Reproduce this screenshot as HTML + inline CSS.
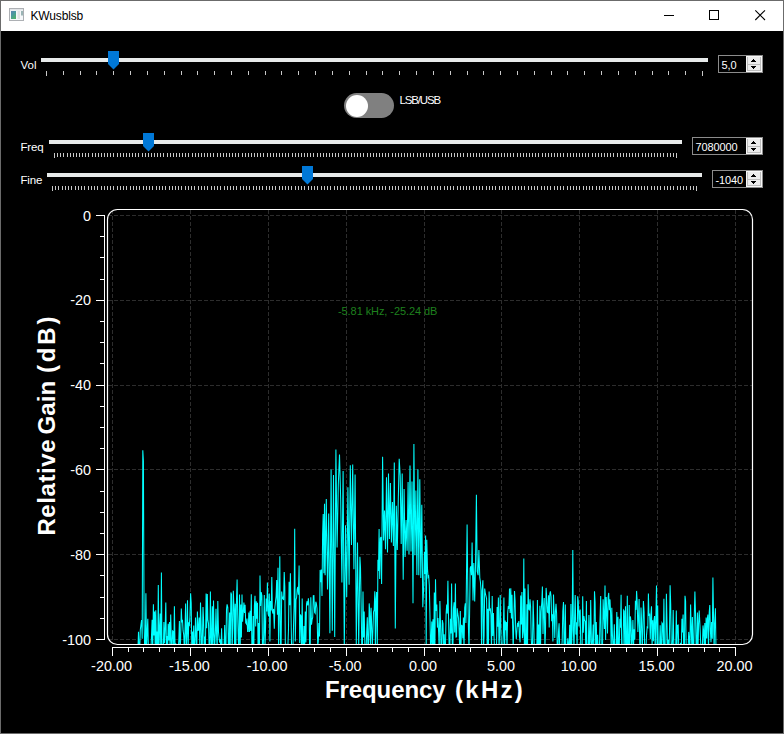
<!DOCTYPE html>
<html><head><meta charset="utf-8"><title>KWusblsb</title>
<style>
html,body{margin:0;padding:0;background:#000;}
body{width:784px;height:734px;position:relative;overflow:hidden;font-family:"Liberation Sans", sans-serif;color:#fff;}
#win{position:absolute;left:0;top:0;width:782px;height:732px;border:1px solid #6b6b6b;background:#000;}
#title{position:absolute;left:1px;top:1px;width:782px;height:30px;background:#fff;color:#000;font-size:12px;}
#title .t{position:absolute;left:29.5px;top:8px;line-height:14px;letter-spacing:-0.15px;}
#icon{position:absolute;left:8px;top:7px;width:15px;height:13px;}
.lbl{position:absolute;font-size:11.5px;line-height:13px;white-space:nowrap;}
.spin{position:absolute;height:16px;border:1px solid #8c8c8c;background:#000;font-size:11px;line-height:16px;}
.spin span{position:absolute;left:2.5px;top:0.5px;letter-spacing:-0.1px}
.spin .btn{position:absolute;right:0;top:0;display:block;}
#tog{position:absolute;left:344px;top:93px;width:50px;height:25px;border-radius:12.5px;background:#808080;}
#tog i{position:absolute;left:1.5px;top:1.5px;width:22px;height:22px;border-radius:11px;background:#fff;}
</style></head><body>
<div id="win"></div>
<div id="title">
<svg id="icon" viewBox="0 0 15 13"><defs><linearGradient id="ig" x1="0" y1="0" x2="0.6" y2="1"><stop offset="0" stop-color="#5d80b0"/><stop offset="0.45" stop-color="#4a98a0"/><stop offset="1" stop-color="#4fae6e"/></linearGradient></defs><rect x="0.5" y="0.5" width="14" height="12" fill="#f6f8fa" stroke="#adb0b4"/><rect x="1" y="1" width="13" height="1.500" fill="#e2e5e8"/><rect x="2" y="3" width="5" height="8" fill="url(#ig)"/><rect x="8.500" y="3" width="2.500" height="8" fill="#e1e2e3"/><rect x="12" y="3" width="2" height="4.500" fill="#8aa8a8" opacity="0.85"/></svg>
<span class="t">KWusblsb</span>
<svg style="position:absolute;right:0;top:0" width="140" height="30" viewBox="0 0 140 30" fill="none" stroke="#000" stroke-width="1"><path d="M21 14.5h10" shape-rendering="crispEdges"/><rect x="66.5" y="9.500" width="9" height="9" shape-rendering="crispEdges"/><path d="M112.300 9.300l9.700 9.700M122 9.300l-9.700 9.700" stroke-width="1.1"/></svg>
</div>
<svg width="784" height="200" viewBox="0 0 784 200" style="position:absolute;left:0;top:0" shape-rendering="crispEdges"><g fill="#e7eaea"><rect x="41" y="58" width="667" height="4"/><rect x="49" y="140" width="633" height="4"/><rect x="47" y="173" width="655" height="4"/></g><g fill="#c8c8c8"><rect x="46" y="71" width="1" height="5"/><rect x="63" y="71" width="1" height="4"/><rect x="80" y="71" width="1" height="4"/><rect x="96" y="71" width="1" height="4"/><rect x="113" y="71" width="1" height="4"/><rect x="130" y="71" width="1" height="4"/><rect x="147" y="71" width="1" height="4"/><rect x="164" y="71" width="1" height="4"/><rect x="181" y="71" width="1" height="4"/><rect x="197" y="71" width="1" height="4"/><rect x="214" y="71" width="1" height="4"/><rect x="231" y="71" width="1" height="4"/><rect x="248" y="71" width="1" height="4"/><rect x="265" y="71" width="1" height="4"/><rect x="281" y="71" width="1" height="4"/><rect x="298" y="71" width="1" height="4"/><rect x="315" y="71" width="1" height="4"/><rect x="332" y="71" width="1" height="4"/><rect x="349" y="71" width="1" height="4"/><rect x="366" y="71" width="1" height="4"/><rect x="382" y="71" width="1" height="4"/><rect x="399" y="71" width="1" height="4"/><rect x="416" y="71" width="1" height="4"/><rect x="433" y="71" width="1" height="4"/><rect x="450" y="71" width="1" height="4"/><rect x="467" y="71" width="1" height="4"/><rect x="483" y="71" width="1" height="4"/><rect x="500" y="71" width="1" height="4"/><rect x="517" y="71" width="1" height="4"/><rect x="534" y="71" width="1" height="4"/><rect x="551" y="71" width="1" height="4"/><rect x="567" y="71" width="1" height="4"/><rect x="584" y="71" width="1" height="4"/><rect x="601" y="71" width="1" height="4"/><rect x="618" y="71" width="1" height="4"/><rect x="635" y="71" width="1" height="4"/><rect x="652" y="71" width="1" height="4"/><rect x="668" y="71" width="1" height="4"/><rect x="685" y="71" width="1" height="4"/><rect x="702" y="71" width="1" height="5"/></g><g fill="#c8c8c8"><rect x="54" y="153" width="1" height="5"/><rect x="57" y="153" width="1" height="4"/><rect x="60" y="153" width="1" height="4"/><rect x="63" y="153" width="1" height="4"/><rect x="67" y="153" width="1" height="4"/><rect x="70" y="153" width="1" height="4"/><rect x="73" y="153" width="1" height="4"/><rect x="76" y="153" width="1" height="4"/><rect x="79" y="153" width="1" height="4"/><rect x="82" y="153" width="1" height="4"/><rect x="85" y="153" width="1" height="4"/><rect x="88" y="153" width="1" height="4"/><rect x="92" y="153" width="1" height="4"/><rect x="95" y="153" width="1" height="4"/><rect x="98" y="153" width="1" height="4"/><rect x="101" y="153" width="1" height="4"/><rect x="104" y="153" width="1" height="4"/><rect x="107" y="153" width="1" height="4"/><rect x="110" y="153" width="1" height="4"/><rect x="113" y="153" width="1" height="4"/><rect x="117" y="153" width="1" height="4"/><rect x="120" y="153" width="1" height="4"/><rect x="123" y="153" width="1" height="4"/><rect x="126" y="153" width="1" height="4"/><rect x="129" y="153" width="1" height="4"/><rect x="132" y="153" width="1" height="4"/><rect x="135" y="153" width="1" height="4"/><rect x="138" y="153" width="1" height="4"/><rect x="142" y="153" width="1" height="4"/><rect x="145" y="153" width="1" height="4"/><rect x="148" y="153" width="1" height="4"/><rect x="151" y="153" width="1" height="4"/><rect x="154" y="153" width="1" height="4"/><rect x="157" y="153" width="1" height="4"/><rect x="160" y="153" width="1" height="4"/><rect x="163" y="153" width="1" height="4"/><rect x="167" y="153" width="1" height="4"/><rect x="170" y="153" width="1" height="4"/><rect x="173" y="153" width="1" height="4"/><rect x="176" y="153" width="1" height="4"/><rect x="179" y="153" width="1" height="4"/><rect x="182" y="153" width="1" height="4"/><rect x="185" y="153" width="1" height="4"/><rect x="188" y="153" width="1" height="4"/><rect x="192" y="153" width="1" height="4"/><rect x="195" y="153" width="1" height="4"/><rect x="198" y="153" width="1" height="4"/><rect x="201" y="153" width="1" height="4"/><rect x="204" y="153" width="1" height="4"/><rect x="207" y="153" width="1" height="4"/><rect x="210" y="153" width="1" height="4"/><rect x="213" y="153" width="1" height="4"/><rect x="217" y="153" width="1" height="4"/><rect x="220" y="153" width="1" height="4"/><rect x="223" y="153" width="1" height="4"/><rect x="226" y="153" width="1" height="4"/><rect x="229" y="153" width="1" height="4"/><rect x="232" y="153" width="1" height="4"/><rect x="235" y="153" width="1" height="4"/><rect x="238" y="153" width="1" height="4"/><rect x="242" y="153" width="1" height="4"/><rect x="245" y="153" width="1" height="4"/><rect x="248" y="153" width="1" height="4"/><rect x="251" y="153" width="1" height="4"/><rect x="254" y="153" width="1" height="4"/><rect x="257" y="153" width="1" height="4"/><rect x="260" y="153" width="1" height="4"/><rect x="263" y="153" width="1" height="4"/><rect x="267" y="153" width="1" height="4"/><rect x="270" y="153" width="1" height="4"/><rect x="273" y="153" width="1" height="4"/><rect x="276" y="153" width="1" height="4"/><rect x="279" y="153" width="1" height="4"/><rect x="282" y="153" width="1" height="4"/><rect x="285" y="153" width="1" height="4"/><rect x="288" y="153" width="1" height="4"/><rect x="292" y="153" width="1" height="4"/><rect x="295" y="153" width="1" height="4"/><rect x="298" y="153" width="1" height="4"/><rect x="301" y="153" width="1" height="4"/><rect x="304" y="153" width="1" height="4"/><rect x="307" y="153" width="1" height="4"/><rect x="310" y="153" width="1" height="4"/><rect x="313" y="153" width="1" height="4"/><rect x="317" y="153" width="1" height="4"/><rect x="320" y="153" width="1" height="4"/><rect x="323" y="153" width="1" height="4"/><rect x="326" y="153" width="1" height="4"/><rect x="329" y="153" width="1" height="4"/><rect x="332" y="153" width="1" height="4"/><rect x="335" y="153" width="1" height="4"/><rect x="338" y="153" width="1" height="4"/><rect x="342" y="153" width="1" height="4"/><rect x="345" y="153" width="1" height="4"/><rect x="348" y="153" width="1" height="4"/><rect x="351" y="153" width="1" height="4"/><rect x="354" y="153" width="1" height="4"/><rect x="357" y="153" width="1" height="4"/><rect x="360" y="153" width="1" height="4"/><rect x="363" y="153" width="1" height="4"/><rect x="367" y="153" width="1" height="4"/><rect x="370" y="153" width="1" height="4"/><rect x="373" y="153" width="1" height="4"/><rect x="376" y="153" width="1" height="4"/><rect x="379" y="153" width="1" height="4"/><rect x="382" y="153" width="1" height="4"/><rect x="385" y="153" width="1" height="4"/><rect x="388" y="153" width="1" height="4"/><rect x="392" y="153" width="1" height="4"/><rect x="395" y="153" width="1" height="4"/><rect x="398" y="153" width="1" height="4"/><rect x="401" y="153" width="1" height="4"/><rect x="404" y="153" width="1" height="4"/><rect x="407" y="153" width="1" height="4"/><rect x="410" y="153" width="1" height="4"/><rect x="413" y="153" width="1" height="4"/><rect x="417" y="153" width="1" height="4"/><rect x="420" y="153" width="1" height="4"/><rect x="423" y="153" width="1" height="4"/><rect x="426" y="153" width="1" height="4"/><rect x="429" y="153" width="1" height="4"/><rect x="432" y="153" width="1" height="4"/><rect x="435" y="153" width="1" height="4"/><rect x="438" y="153" width="1" height="4"/><rect x="442" y="153" width="1" height="4"/><rect x="445" y="153" width="1" height="4"/><rect x="448" y="153" width="1" height="4"/><rect x="451" y="153" width="1" height="4"/><rect x="454" y="153" width="1" height="4"/><rect x="457" y="153" width="1" height="4"/><rect x="460" y="153" width="1" height="4"/><rect x="463" y="153" width="1" height="4"/><rect x="467" y="153" width="1" height="4"/><rect x="470" y="153" width="1" height="4"/><rect x="473" y="153" width="1" height="4"/><rect x="476" y="153" width="1" height="4"/><rect x="479" y="153" width="1" height="4"/><rect x="482" y="153" width="1" height="4"/><rect x="485" y="153" width="1" height="4"/><rect x="488" y="153" width="1" height="4"/><rect x="492" y="153" width="1" height="4"/><rect x="495" y="153" width="1" height="4"/><rect x="498" y="153" width="1" height="4"/><rect x="501" y="153" width="1" height="4"/><rect x="504" y="153" width="1" height="4"/><rect x="507" y="153" width="1" height="4"/><rect x="510" y="153" width="1" height="4"/><rect x="513" y="153" width="1" height="4"/><rect x="517" y="153" width="1" height="4"/><rect x="520" y="153" width="1" height="4"/><rect x="523" y="153" width="1" height="4"/><rect x="526" y="153" width="1" height="4"/><rect x="529" y="153" width="1" height="4"/><rect x="532" y="153" width="1" height="4"/><rect x="535" y="153" width="1" height="4"/><rect x="538" y="153" width="1" height="4"/><rect x="542" y="153" width="1" height="4"/><rect x="545" y="153" width="1" height="4"/><rect x="548" y="153" width="1" height="4"/><rect x="551" y="153" width="1" height="4"/><rect x="554" y="153" width="1" height="4"/><rect x="557" y="153" width="1" height="4"/><rect x="560" y="153" width="1" height="4"/><rect x="563" y="153" width="1" height="4"/><rect x="567" y="153" width="1" height="4"/><rect x="570" y="153" width="1" height="4"/><rect x="573" y="153" width="1" height="4"/><rect x="576" y="153" width="1" height="4"/><rect x="579" y="153" width="1" height="4"/><rect x="582" y="153" width="1" height="4"/><rect x="585" y="153" width="1" height="4"/><rect x="588" y="153" width="1" height="4"/><rect x="592" y="153" width="1" height="4"/><rect x="595" y="153" width="1" height="4"/><rect x="598" y="153" width="1" height="4"/><rect x="601" y="153" width="1" height="4"/><rect x="604" y="153" width="1" height="4"/><rect x="607" y="153" width="1" height="4"/><rect x="610" y="153" width="1" height="4"/><rect x="613" y="153" width="1" height="4"/><rect x="617" y="153" width="1" height="4"/><rect x="620" y="153" width="1" height="4"/><rect x="623" y="153" width="1" height="4"/><rect x="626" y="153" width="1" height="4"/><rect x="629" y="153" width="1" height="4"/><rect x="632" y="153" width="1" height="4"/><rect x="635" y="153" width="1" height="4"/><rect x="638" y="153" width="1" height="4"/><rect x="642" y="153" width="1" height="4"/><rect x="645" y="153" width="1" height="4"/><rect x="648" y="153" width="1" height="4"/><rect x="651" y="153" width="1" height="4"/><rect x="654" y="153" width="1" height="4"/><rect x="657" y="153" width="1" height="4"/><rect x="660" y="153" width="1" height="4"/><rect x="663" y="153" width="1" height="4"/><rect x="667" y="153" width="1" height="4"/><rect x="670" y="153" width="1" height="4"/><rect x="673" y="153" width="1" height="4"/><rect x="676" y="153" width="1" height="5"/></g><g fill="#c8c8c8"><rect x="52" y="186" width="1" height="5"/><rect x="55" y="186" width="1" height="4"/><rect x="58" y="186" width="1" height="4"/><rect x="62" y="186" width="1" height="4"/><rect x="65" y="186" width="1" height="4"/><rect x="68" y="186" width="1" height="4"/><rect x="71" y="186" width="1" height="4"/><rect x="75" y="186" width="1" height="4"/><rect x="78" y="186" width="1" height="4"/><rect x="81" y="186" width="1" height="4"/><rect x="84" y="186" width="1" height="4"/><rect x="88" y="186" width="1" height="4"/><rect x="91" y="186" width="1" height="4"/><rect x="94" y="186" width="1" height="4"/><rect x="97" y="186" width="1" height="4"/><rect x="101" y="186" width="1" height="4"/><rect x="104" y="186" width="1" height="4"/><rect x="107" y="186" width="1" height="4"/><rect x="110" y="186" width="1" height="4"/><rect x="113" y="186" width="1" height="4"/><rect x="117" y="186" width="1" height="4"/><rect x="120" y="186" width="1" height="4"/><rect x="123" y="186" width="1" height="4"/><rect x="126" y="186" width="1" height="4"/><rect x="130" y="186" width="1" height="4"/><rect x="133" y="186" width="1" height="4"/><rect x="136" y="186" width="1" height="4"/><rect x="139" y="186" width="1" height="4"/><rect x="143" y="186" width="1" height="4"/><rect x="146" y="186" width="1" height="4"/><rect x="149" y="186" width="1" height="4"/><rect x="152" y="186" width="1" height="4"/><rect x="156" y="186" width="1" height="4"/><rect x="159" y="186" width="1" height="4"/><rect x="162" y="186" width="1" height="4"/><rect x="165" y="186" width="1" height="4"/><rect x="169" y="186" width="1" height="4"/><rect x="172" y="186" width="1" height="4"/><rect x="175" y="186" width="1" height="4"/><rect x="178" y="186" width="1" height="4"/><rect x="181" y="186" width="1" height="4"/><rect x="185" y="186" width="1" height="4"/><rect x="188" y="186" width="1" height="4"/><rect x="191" y="186" width="1" height="4"/><rect x="194" y="186" width="1" height="4"/><rect x="198" y="186" width="1" height="4"/><rect x="201" y="186" width="1" height="4"/><rect x="204" y="186" width="1" height="4"/><rect x="207" y="186" width="1" height="4"/><rect x="211" y="186" width="1" height="4"/><rect x="214" y="186" width="1" height="4"/><rect x="217" y="186" width="1" height="4"/><rect x="220" y="186" width="1" height="4"/><rect x="224" y="186" width="1" height="4"/><rect x="227" y="186" width="1" height="4"/><rect x="230" y="186" width="1" height="4"/><rect x="233" y="186" width="1" height="4"/><rect x="236" y="186" width="1" height="4"/><rect x="240" y="186" width="1" height="4"/><rect x="243" y="186" width="1" height="4"/><rect x="246" y="186" width="1" height="4"/><rect x="249" y="186" width="1" height="4"/><rect x="253" y="186" width="1" height="4"/><rect x="256" y="186" width="1" height="4"/><rect x="259" y="186" width="1" height="4"/><rect x="262" y="186" width="1" height="4"/><rect x="266" y="186" width="1" height="4"/><rect x="269" y="186" width="1" height="4"/><rect x="272" y="186" width="1" height="4"/><rect x="275" y="186" width="1" height="4"/><rect x="279" y="186" width="1" height="4"/><rect x="282" y="186" width="1" height="4"/><rect x="285" y="186" width="1" height="4"/><rect x="288" y="186" width="1" height="4"/><rect x="291" y="186" width="1" height="4"/><rect x="295" y="186" width="1" height="4"/><rect x="298" y="186" width="1" height="4"/><rect x="301" y="186" width="1" height="4"/><rect x="304" y="186" width="1" height="4"/><rect x="308" y="186" width="1" height="4"/><rect x="311" y="186" width="1" height="4"/><rect x="314" y="186" width="1" height="4"/><rect x="317" y="186" width="1" height="4"/><rect x="321" y="186" width="1" height="4"/><rect x="324" y="186" width="1" height="4"/><rect x="327" y="186" width="1" height="4"/><rect x="330" y="186" width="1" height="4"/><rect x="334" y="186" width="1" height="4"/><rect x="337" y="186" width="1" height="4"/><rect x="340" y="186" width="1" height="4"/><rect x="343" y="186" width="1" height="4"/><rect x="346" y="186" width="1" height="4"/><rect x="350" y="186" width="1" height="4"/><rect x="353" y="186" width="1" height="4"/><rect x="356" y="186" width="1" height="4"/><rect x="359" y="186" width="1" height="4"/><rect x="363" y="186" width="1" height="4"/><rect x="366" y="186" width="1" height="4"/><rect x="369" y="186" width="1" height="4"/><rect x="372" y="186" width="1" height="4"/><rect x="376" y="186" width="1" height="4"/><rect x="379" y="186" width="1" height="4"/><rect x="382" y="186" width="1" height="4"/><rect x="385" y="186" width="1" height="4"/><rect x="389" y="186" width="1" height="4"/><rect x="392" y="186" width="1" height="4"/><rect x="395" y="186" width="1" height="4"/><rect x="398" y="186" width="1" height="4"/><rect x="402" y="186" width="1" height="4"/><rect x="405" y="186" width="1" height="4"/><rect x="408" y="186" width="1" height="4"/><rect x="411" y="186" width="1" height="4"/><rect x="414" y="186" width="1" height="4"/><rect x="418" y="186" width="1" height="4"/><rect x="421" y="186" width="1" height="4"/><rect x="424" y="186" width="1" height="4"/><rect x="427" y="186" width="1" height="4"/><rect x="431" y="186" width="1" height="4"/><rect x="434" y="186" width="1" height="4"/><rect x="437" y="186" width="1" height="4"/><rect x="440" y="186" width="1" height="4"/><rect x="444" y="186" width="1" height="4"/><rect x="447" y="186" width="1" height="4"/><rect x="450" y="186" width="1" height="4"/><rect x="453" y="186" width="1" height="4"/><rect x="457" y="186" width="1" height="4"/><rect x="460" y="186" width="1" height="4"/><rect x="463" y="186" width="1" height="4"/><rect x="466" y="186" width="1" height="4"/><rect x="469" y="186" width="1" height="4"/><rect x="473" y="186" width="1" height="4"/><rect x="476" y="186" width="1" height="4"/><rect x="479" y="186" width="1" height="4"/><rect x="482" y="186" width="1" height="4"/><rect x="486" y="186" width="1" height="4"/><rect x="489" y="186" width="1" height="4"/><rect x="492" y="186" width="1" height="4"/><rect x="495" y="186" width="1" height="4"/><rect x="499" y="186" width="1" height="4"/><rect x="502" y="186" width="1" height="4"/><rect x="505" y="186" width="1" height="4"/><rect x="508" y="186" width="1" height="4"/><rect x="512" y="186" width="1" height="4"/><rect x="515" y="186" width="1" height="4"/><rect x="518" y="186" width="1" height="4"/><rect x="521" y="186" width="1" height="4"/><rect x="524" y="186" width="1" height="4"/><rect x="528" y="186" width="1" height="4"/><rect x="531" y="186" width="1" height="4"/><rect x="534" y="186" width="1" height="4"/><rect x="537" y="186" width="1" height="4"/><rect x="541" y="186" width="1" height="4"/><rect x="544" y="186" width="1" height="4"/><rect x="547" y="186" width="1" height="4"/><rect x="550" y="186" width="1" height="4"/><rect x="554" y="186" width="1" height="4"/><rect x="557" y="186" width="1" height="4"/><rect x="560" y="186" width="1" height="4"/><rect x="563" y="186" width="1" height="4"/><rect x="567" y="186" width="1" height="4"/><rect x="570" y="186" width="1" height="4"/><rect x="573" y="186" width="1" height="4"/><rect x="576" y="186" width="1" height="4"/><rect x="579" y="186" width="1" height="4"/><rect x="583" y="186" width="1" height="4"/><rect x="586" y="186" width="1" height="4"/><rect x="589" y="186" width="1" height="4"/><rect x="592" y="186" width="1" height="4"/><rect x="596" y="186" width="1" height="4"/><rect x="599" y="186" width="1" height="4"/><rect x="602" y="186" width="1" height="4"/><rect x="605" y="186" width="1" height="4"/><rect x="609" y="186" width="1" height="4"/><rect x="612" y="186" width="1" height="4"/><rect x="615" y="186" width="1" height="4"/><rect x="618" y="186" width="1" height="4"/><rect x="622" y="186" width="1" height="4"/><rect x="625" y="186" width="1" height="4"/><rect x="628" y="186" width="1" height="4"/><rect x="631" y="186" width="1" height="4"/><rect x="635" y="186" width="1" height="4"/><rect x="638" y="186" width="1" height="4"/><rect x="641" y="186" width="1" height="4"/><rect x="644" y="186" width="1" height="4"/><rect x="647" y="186" width="1" height="4"/><rect x="651" y="186" width="1" height="4"/><rect x="654" y="186" width="1" height="4"/><rect x="657" y="186" width="1" height="4"/><rect x="660" y="186" width="1" height="4"/><rect x="664" y="186" width="1" height="4"/><rect x="667" y="186" width="1" height="4"/><rect x="670" y="186" width="1" height="4"/><rect x="673" y="186" width="1" height="4"/><rect x="677" y="186" width="1" height="4"/><rect x="680" y="186" width="1" height="4"/><rect x="683" y="186" width="1" height="4"/><rect x="686" y="186" width="1" height="4"/><rect x="690" y="186" width="1" height="4"/><rect x="693" y="186" width="1" height="4"/><rect x="696" y="186" width="1" height="5"/></g><path shape-rendering="geometricPrecision" d="M108 51h11v13l-5.5 5.5l-5.5 -5.5z" fill="#0078d7"/><path shape-rendering="geometricPrecision" d="M143 133h11v13l-5.5 5.5l-5.5 -5.5z" fill="#0078d7"/><path shape-rendering="geometricPrecision" d="M302 166h11v13l-5.5 5.5l-5.5 -5.5z" fill="#0078d7"/></svg>
<div class="lbl" style="left:20.5px;top:58.5px">Vol</div>
<div class="lbl" style="left:20.5px;top:141px;letter-spacing:-0.2px">Freq</div>
<div class="lbl" style="left:20.5px;top:174px;letter-spacing:-0.2px">Fine</div>
<div id="tog"><i></i></div>
<div class="lbl" style="left:399.5px;top:94px;letter-spacing:-1.15px">LSB/USB</div>
<div class="spin" style="left:718px;top:55px;width:43px"><span>5,0</span><svg class="btn" width="16" height="16" viewBox="0 0 16 16" shape-rendering="crispEdges"><rect width="16" height="16" fill="#f7f7f7"/><rect x="1" y="1" width="14" height="14" fill="#ececec"/><g fill="#bdbdbd"><rect x="1" y="1" width="1" height="14"/><rect x="14" y="1" width="1" height="14"/><rect x="1" y="8" width="14" height="1"/><rect x="1" y="14" width="14" height="1"/></g><g fill="#000"><rect x="7" y="3" width="1" height="1"/><rect x="6" y="4" width="3" height="1"/><rect x="5" y="5" width="5" height="1"/><rect x="5" y="10" width="5" height="1"/><rect x="6" y="11" width="3" height="1"/><rect x="7" y="12" width="1" height="1"/></g></svg></div>
<div class="spin" style="left:692px;top:137px;width:69px"><span>7080000</span><svg class="btn" width="16" height="16" viewBox="0 0 16 16" shape-rendering="crispEdges"><rect width="16" height="16" fill="#f7f7f7"/><rect x="1" y="1" width="14" height="14" fill="#ececec"/><g fill="#bdbdbd"><rect x="1" y="1" width="1" height="14"/><rect x="14" y="1" width="1" height="14"/><rect x="1" y="8" width="14" height="1"/><rect x="1" y="14" width="14" height="1"/></g><g fill="#000"><rect x="7" y="3" width="1" height="1"/><rect x="6" y="4" width="3" height="1"/><rect x="5" y="5" width="5" height="1"/><rect x="5" y="10" width="5" height="1"/><rect x="6" y="11" width="3" height="1"/><rect x="7" y="12" width="1" height="1"/></g></svg></div>
<div class="spin" style="left:712px;top:170px;width:49px"><span>-1040</span><svg class="btn" width="16" height="16" viewBox="0 0 16 16" shape-rendering="crispEdges"><rect width="16" height="16" fill="#f7f7f7"/><rect x="1" y="1" width="14" height="14" fill="#ececec"/><g fill="#bdbdbd"><rect x="1" y="1" width="1" height="14"/><rect x="14" y="1" width="1" height="14"/><rect x="1" y="8" width="14" height="1"/><rect x="1" y="14" width="14" height="1"/></g><g fill="#000"><rect x="7" y="3" width="1" height="1"/><rect x="6" y="4" width="3" height="1"/><rect x="5" y="5" width="5" height="1"/><rect x="5" y="10" width="5" height="1"/><rect x="6" y="11" width="3" height="1"/><rect x="7" y="12" width="1" height="1"/></g></svg></div>
<svg width="784" height="734" viewBox="0 0 784 734" style="position:absolute;left:0;top:0" font-family='"Liberation Sans", sans-serif'><defs><clipPath id="pc"><rect x="108" y="210" width="644" height="434" rx="9"/></clipPath></defs><g stroke="#2d2d2d" stroke-width="1" stroke-dasharray="4 2" fill="none" clip-path="url(#pc)"><path d="M108 215.5H752"/><path d="M108 300.5H752"/><path d="M108 385.5H752"/><path d="M108 469.5H752"/><path d="M108 554.5H752"/><path d="M108 639.5H752"/><path d="M112.5 210V644"/><path d="M190.5 210V644"/><path d="M268.5 210V644"/><path d="M346.5 210V644"/><path d="M424.5 210V644"/><path d="M501.5 210V644"/><path d="M579.5 210V644"/><path d="M657.5 210V644"/><path d="M735.5 210V644"/></g><path d="M136.0 648.4L136.6 650.0L137.2 647.9L137.9 650.0L138.5 631.8L139.1 650.0L139.7 650.0L140.3 629.8L141.0 624.3L141.6 620.1L142.2 638.7L142.8 450.3L143.4 460.9L144.1 623.5L144.7 650.0L145.3 650.0L145.9 593.2L146.5 650.0L147.2 631.7L147.8 618.7L148.4 650.0L149.0 650.0L149.6 650.0L150.3 650.0L150.9 650.0L151.5 636.1L152.1 619.7L152.7 650.0L153.4 604.3L154.0 635.5L154.6 611.5L155.2 650.0L155.8 610.3L156.5 650.0L157.1 631.6L157.7 650.0L158.3 584.9L158.9 650.0L159.6 628.6L160.2 613.5L160.8 650.0L161.4 572.4L162.0 650.0L162.7 650.0L163.3 650.0L163.9 621.9L164.5 643.2L165.1 629.7L165.8 602.4L166.4 647.2L167.0 635.9L167.6 650.0L168.2 623.7L168.9 640.6L169.5 621.9L170.1 650.0L170.7 614.5L171.3 639.2L172.0 650.0L172.6 630.9L173.2 631.5L173.8 649.7L174.4 606.2L175.1 650.0L175.7 643.4L176.3 646.6L176.9 650.0L177.5 650.0L178.2 650.0L178.8 640.5L179.4 621.1L180.0 650.0L180.6 640.9L181.3 608.5L181.9 622.3L182.5 619.8L183.1 630.7L183.7 634.6L184.4 650.0L185.0 630.9L185.6 603.4L186.2 650.0L186.8 634.7L187.5 600.2L188.1 650.0L188.7 622.3L189.3 626.1L189.9 617.2L190.6 593.3L191.2 603.1L191.8 650.0L192.4 631.5L193.0 650.0L193.7 625.5L194.3 650.0L194.9 650.0L195.5 617.5L196.1 633.6L196.8 650.0L197.4 611.4L198.0 630.9L198.6 629.4L199.2 617.5L199.9 650.0L200.5 602.5L201.1 624.3L201.7 650.0L202.3 644.2L203.0 606.9L203.6 620.4L204.2 650.0L204.8 636.4L205.4 650.0L206.1 593.4L206.7 628.3L207.3 594.1L207.9 620.2L208.5 623.4L209.2 650.0L209.8 650.0L210.4 591.6L211.0 637.9L211.6 650.0L212.3 606.2L212.9 650.0L213.5 600.5L214.1 633.9L214.7 647.3L215.4 631.9L216.0 608.7L216.6 635.4L217.2 650.0L217.8 600.9L218.5 632.1L219.1 637.8L219.7 642.7L220.3 639.2L220.9 650.0L221.6 628.3L222.2 650.0L222.8 650.0L223.4 650.0L224.0 650.0L224.7 624.9L225.3 646.5L225.9 650.0L226.5 609.5L227.1 604.4L227.8 607.5L228.4 650.0L229.0 646.2L229.6 612.4L230.2 650.0L230.9 592.4L231.5 594.5L232.1 650.0L232.7 628.1L233.3 590.8L234.0 608.0L234.6 650.0L235.2 603.8L235.8 650.0L236.4 603.7L237.1 579.5L237.7 615.0L238.3 639.0L238.9 650.0L239.5 594.6L240.2 650.0L240.8 604.5L241.4 637.4L242.0 594.5L242.6 621.8L243.3 612.0L243.9 602.6L244.5 612.9L245.1 604.7L245.7 622.8L246.4 623.9L247.0 618.5L247.6 631.4L248.2 631.4L248.8 612.4L249.5 632.0L250.1 610.7L250.7 630.9L251.3 594.2L251.9 650.0L252.6 650.0L253.2 615.9L253.8 650.0L254.4 605.7L255.0 595.7L255.7 626.5L256.3 601.3L256.9 618.8L257.5 602.7L258.1 650.0L258.8 622.9L259.4 650.0L260.0 575.4L260.6 605.9L261.2 592.2L261.9 595.8L262.5 650.0L263.1 650.0L263.7 634.1L264.3 595.0L265.0 650.0L265.6 625.0L266.2 598.4L266.8 611.4L267.4 582.4L268.1 613.6L268.7 616.3L269.3 593.6L269.9 641.6L270.5 600.9L271.2 610.5L271.8 577.1L272.4 611.7L273.0 613.6L273.6 608.9L274.3 628.7L274.9 607.3L275.5 601.5L276.1 596.1L276.7 580.1L277.4 614.8L278.0 567.8L278.6 650.0L279.2 612.7L279.8 556.3L280.5 644.6L281.1 646.2L281.7 591.5L282.3 598.5L282.9 597.6L283.6 600.1L284.2 572.1L284.8 586.4L285.4 650.0L286.0 643.8L286.7 650.0L287.3 647.7L287.9 646.7L288.5 629.3L289.1 581.8L289.8 605.3L290.4 573.3L291.0 611.9L291.6 650.0L292.2 645.6L292.9 650.0L293.5 627.3L294.1 605.1L294.7 528.8L295.3 641.5L296.0 599.6L296.6 597.7L297.2 589.0L297.8 587.0L298.4 594.7L299.1 565.5L299.7 643.0L300.3 614.4L300.9 615.9L301.5 650.0L302.2 598.4L302.8 650.0L303.4 650.0L304.0 626.1L304.6 650.0L305.3 611.6L305.9 642.6L306.5 604.1L307.1 601.2L307.7 605.4L308.4 598.4L309.0 605.8L309.6 647.0L310.2 650.0L310.8 597.2L311.5 624.6L312.1 619.7L312.7 617.5L313.3 595.8L313.9 595.7L314.6 612.4L315.2 613.3L315.8 601.7L316.4 603.5L317.0 608.5L317.7 645.5L318.3 641.7L318.9 623.0L319.5 636.4L320.1 569.9L320.8 582.3L321.4 569.5L322.0 596.1L322.6 534.6L323.2 513.9L323.9 573.2L324.5 503.8L325.1 575.3L326.3 499.1L327.5 589.6L328.7 513.5L329.9 633.3L331.1 469.4L332.3 630.8L333.5 475.1L334.7 637.0L335.9 449.5L337.1 547.5L338.3 484.8L339.5 454.6L340.7 499.6L341.9 582.5L343.1 471.0L344.3 650.0L345.5 525.2L346.7 597.0L347.9 487.2L349.1 584.8L350.3 465.2L351.5 545.1L352.7 464.6L353.9 569.2L355.1 474.4L356.3 644.2L357.5 542.4L358.7 647.1L359.9 556.7L360.5 567.2L361.1 602.6L361.8 650.0L362.4 650.0L363.0 591.5L363.6 637.6L364.2 611.5L364.9 644.9L365.5 647.7L366.1 650.0L366.7 631.6L367.3 617.3L368.0 650.0L368.6 641.9L369.2 603.4L369.8 612.6L370.4 645.0L371.1 607.8L371.7 626.4L372.3 647.3L372.9 631.1L373.5 612.0L374.2 609.7L374.8 591.2L375.4 649.4L376.0 599.1L376.6 592.1L377.3 650.0L377.9 559.7L378.5 571.0L379.1 529.1L379.7 579.1L380.4 538.2L381.0 536.9L381.6 584.1L382.6 456.7L383.6 540.4L384.5 510.6L385.5 549.3L386.5 477.2L387.5 552.5L388.5 473.6L389.4 538.9L390.4 483.1L391.4 542.4L392.4 501.9L393.4 546.1L394.3 462.6L395.3 628.5L396.3 505.7L397.3 549.9L398.3 499.3L399.2 458.8L400.2 475.8L401.2 544.0L402.2 473.6L403.2 579.7L404.1 489.1L405.1 557.0L406.1 519.9L407.1 550.7L408.1 481.9L409.0 554.2L410.0 465.6L411.0 551.6L412.0 481.4L413.0 603.2L413.9 444.0L414.9 555.3L415.9 490.5L416.9 575.1L417.9 469.2L418.8 575.3L419.8 479.3L420.8 578.1L421.8 504.7L422.8 607.3L423.7 587.3L424.4 551.8L425.0 574.0L425.6 535.4L426.2 645.3L426.8 539.8L427.5 568.7L428.1 577.2L428.7 576.2L429.3 585.1L429.9 612.4L430.6 650.0L431.2 641.3L431.8 621.5L432.4 650.0L433.0 619.3L433.7 650.0L434.3 592.6L434.9 650.0L435.5 579.3L436.1 611.0L436.8 604.5L437.4 627.6L438.0 618.1L438.6 632.0L439.2 650.0L439.9 601.0L440.5 622.6L441.1 650.0L441.7 650.0L442.3 620.0L443.0 623.5L443.6 650.0L444.2 634.2L444.8 650.0L445.4 650.0L446.1 613.5L446.7 604.5L447.3 613.6L447.9 580.8L448.5 616.4L449.2 650.0L449.8 650.0L450.4 618.8L451.0 633.4L451.6 583.5L452.3 650.0L452.9 650.0L453.5 608.4L454.1 602.3L454.7 632.6L455.4 583.4L456.0 637.0L456.6 636.8L457.2 608.3L457.8 613.7L458.5 618.1L459.1 631.3L459.7 650.0L460.3 610.9L460.9 650.0L461.6 625.5L462.2 625.9L462.8 638.4L463.4 617.6L464.0 650.0L464.7 607.7L465.3 603.3L465.9 622.9L466.5 574.4L467.1 524.5L467.8 590.2L468.4 626.9L469.0 650.0L469.6 612.8L470.2 568.0L470.9 566.2L471.5 575.2L472.1 542.4L473.0 600.4L473.8 563.0L474.7 601.6L475.5 565.9L476.4 494.8L477.2 571.4L478.1 575.2L478.9 550.0L479.8 577.8L480.4 581.7L481.0 590.0L481.6 650.0L482.2 590.9L482.9 580.2L483.5 650.0L484.1 635.4L484.7 588.5L485.3 593.0L486.0 596.0L486.6 598.9L487.2 650.0L487.8 608.7L488.4 650.0L489.1 591.5L489.7 610.6L490.3 608.2L490.9 614.7L491.5 650.0L492.2 596.0L492.8 636.0L493.4 613.1L494.0 635.6L494.6 650.0L495.3 650.0L495.9 650.0L496.5 650.0L497.1 606.9L497.7 626.7L498.4 597.5L499.0 650.0L499.6 634.4L500.2 594.9L500.8 628.4L501.5 650.0L502.1 650.0L502.7 649.1L503.3 633.8L503.9 597.6L504.6 650.0L505.2 620.5L505.8 630.3L506.4 622.0L507.0 650.0L507.7 612.8L508.3 606.0L508.9 609.0L509.5 588.6L510.1 612.9L510.8 588.2L511.4 618.4L512.0 594.8L512.6 624.8L513.2 650.0L513.9 618.1L514.5 591.0L515.1 600.9L515.7 630.0L516.3 639.2L517.0 628.8L517.6 622.7L518.2 626.6L518.8 621.1L519.4 636.5L520.1 642.4L520.7 595.5L521.3 624.4L521.9 592.0L522.5 638.2L523.2 631.5L523.8 558.4L524.4 650.0L525.0 588.6L525.6 650.0L526.3 650.0L526.9 604.3L527.5 650.0L528.1 584.2L528.7 609.1L529.4 609.8L530.0 599.3L530.6 606.8L531.2 637.4L531.8 650.0L532.5 644.5L533.1 600.4L533.7 619.5L534.3 650.0L534.9 650.0L535.6 648.0L536.2 643.8L536.8 650.0L537.4 600.0L538.0 650.0L538.7 624.4L539.3 650.0L539.9 605.7L540.5 650.0L541.1 611.8L541.8 601.7L542.4 586.5L543.0 633.9L543.6 610.8L544.2 597.9L544.9 648.2L545.5 632.0L546.1 587.9L546.7 597.4L547.3 612.0L548.0 612.6L548.6 595.3L549.2 627.6L549.8 593.9L550.4 591.4L551.1 596.8L551.7 621.3L552.3 614.2L552.9 641.6L553.5 594.6L554.2 615.1L554.8 638.0L555.4 612.1L556.0 603.7L556.6 613.2L557.3 650.0L557.9 650.0L558.5 631.7L559.1 623.2L559.7 648.0L560.4 650.0L561.0 650.0L561.6 650.0L562.2 640.8L562.8 611.2L563.5 602.0L564.1 650.0L564.7 650.0L565.3 604.6L565.9 650.0L566.6 650.0L567.2 650.0L567.8 638.3L568.4 645.9L569.0 650.0L569.7 624.7L570.3 650.0L570.9 603.9L571.5 650.0L572.1 629.5L572.8 550.0L573.4 631.1L574.0 650.0L574.6 618.0L575.2 594.9L575.9 634.6L576.5 622.2L577.1 650.0L577.7 596.3L578.3 601.3L579.0 626.5L579.6 611.1L580.2 609.6L580.8 650.0L581.4 650.0L582.1 650.0L582.7 596.2L583.3 632.7L583.9 616.0L584.5 620.6L585.2 621.2L585.8 650.0L586.4 601.0L587.0 650.0L587.6 650.0L588.3 650.0L588.9 614.9L589.5 650.0L590.1 641.8L590.7 600.1L591.4 641.7L592.0 650.0L592.6 639.6L593.2 624.5L593.8 650.0L594.5 591.2L595.1 602.3L595.7 650.0L596.3 622.0L596.9 650.0L597.6 634.7L598.2 650.0L598.8 650.0L599.4 650.0L600.0 619.7L600.7 595.9L601.3 650.0L601.9 649.7L602.5 650.0L603.1 599.2L603.8 615.8L604.4 629.0L605.0 585.4L605.6 639.9L606.2 597.1L606.9 612.8L607.5 633.4L608.1 597.5L608.7 592.9L609.3 610.3L610.0 599.4L610.6 613.2L611.2 650.0L611.8 607.7L612.4 633.8L613.1 650.0L613.7 645.1L614.3 624.2L614.9 650.0L615.5 650.0L616.2 648.9L616.8 612.1L617.4 650.0L618.0 616.8L618.6 650.0L619.3 644.4L619.9 618.7L620.5 627.7L621.1 594.8L621.7 648.7L622.4 650.0L623.0 650.0L623.6 610.2L624.2 611.1L624.8 650.0L625.5 606.2L626.1 650.0L626.7 650.0L627.3 595.8L627.9 650.0L628.6 650.0L629.2 605.1L629.8 650.0L630.4 616.4L631.0 621.7L631.7 650.0L632.3 638.2L632.9 620.1L633.5 649.4L634.1 629.2L634.8 639.7L635.4 600.7L636.0 609.9L636.6 590.9L637.2 602.0L637.9 632.1L638.5 617.5L639.1 599.1L639.7 642.9L640.3 650.0L641.0 607.6L641.6 621.0L642.2 650.0L642.8 633.1L643.4 601.0L644.1 612.0L644.7 650.0L645.3 650.0L645.9 650.0L646.5 635.4L647.2 627.1L647.8 627.6L648.4 593.5L649.0 615.8L649.6 613.4L650.3 639.1L650.9 615.0L651.5 606.2L652.1 647.3L652.7 620.3L653.4 641.3L654.0 620.1L654.6 616.0L655.2 650.0L655.8 621.2L656.5 585.5L657.1 650.0L657.7 605.6L658.3 650.0L658.9 650.0L659.6 646.6L660.2 625.2L660.8 650.0L661.4 650.0L662.0 622.9L662.7 624.2L663.3 646.9L663.9 598.8L664.5 647.0L665.1 650.0L665.8 650.0L666.4 593.8L667.0 622.1L667.6 650.0L668.2 639.8L668.9 650.0L669.5 632.9L670.1 585.3L670.7 604.0L671.3 650.0L672.0 650.0L672.6 639.3L673.2 609.9L673.8 646.0L674.4 650.0L675.1 650.0L675.7 650.0L676.3 610.6L676.9 650.0L677.5 625.4L678.2 625.1L678.8 650.0L679.4 644.9L680.0 650.0L680.6 642.8L681.3 650.0L681.9 618.8L682.5 632.4L683.1 614.5L683.7 647.2L684.4 650.0L685.0 595.7L685.6 601.1L686.2 650.0L686.8 650.0L687.5 650.0L688.1 650.0L688.7 631.9L689.3 640.0L689.9 650.0L690.6 604.6L691.2 627.5L691.8 647.1L692.4 616.9L693.0 650.0L693.7 650.0L694.3 615.0L694.9 591.5L695.5 612.8L696.1 645.0L696.8 646.3L697.4 612.6L698.0 650.0L698.6 624.2L699.2 610.6L699.9 624.3L700.5 639.0L701.1 650.0L701.7 646.7L702.3 650.0L703.0 625.4L703.6 630.9L704.2 646.5L704.8 623.0L705.4 650.0L706.1 617.6L706.7 638.6L707.3 619.1L707.9 614.6L708.5 650.0L709.2 612.8L709.8 605.1L710.4 630.4L711.0 642.3L711.6 621.9L712.3 638.7L712.9 577.5L713.5 613.9L714.1 650.0L714.7 623.8L715.4 608.2L716.0 650.0L716.6 645.9" fill="none" stroke="#00ffff" stroke-width="1.05" stroke-linejoin="miter" clip-path="url(#pc)"/><rect x="107.5" y="209.5" width="645" height="435" rx="10" fill="none" stroke="#fff" stroke-width="1.2"/><g fill="#fff" shape-rendering="crispEdges"><rect x="104" y="215" width="1" height="425"/><rect x="96" y="215" width="8" height="1"/><rect x="100" y="236" width="4" height="1"/><rect x="100" y="257" width="4" height="1"/><rect x="100" y="279" width="4" height="1"/><rect x="96" y="300" width="8" height="1"/><rect x="100" y="321" width="4" height="1"/><rect x="100" y="342" width="4" height="1"/><rect x="100" y="363" width="4" height="1"/><rect x="96" y="385" width="8" height="1"/><rect x="100" y="406" width="4" height="1"/><rect x="100" y="427" width="4" height="1"/><rect x="100" y="448" width="4" height="1"/><rect x="96" y="469" width="8" height="1"/><rect x="100" y="491" width="4" height="1"/><rect x="100" y="512" width="4" height="1"/><rect x="100" y="533" width="4" height="1"/><rect x="96" y="554" width="8" height="1"/><rect x="100" y="575" width="4" height="1"/><rect x="100" y="597" width="4" height="1"/><rect x="100" y="618" width="4" height="1"/><rect x="96" y="639" width="8" height="1"/><rect x="112" y="647" width="624" height="1"/><rect x="112" y="648" width="1" height="8"/><rect x="128" y="648" width="1" height="4"/><rect x="143" y="648" width="1" height="4"/><rect x="159" y="648" width="1" height="4"/><rect x="174" y="648" width="1" height="4"/><rect x="190" y="648" width="1" height="8"/><rect x="205" y="648" width="1" height="4"/><rect x="221" y="648" width="1" height="4"/><rect x="237" y="648" width="1" height="4"/><rect x="252" y="648" width="1" height="4"/><rect x="268" y="648" width="1" height="8"/><rect x="283" y="648" width="1" height="4"/><rect x="299" y="648" width="1" height="4"/><rect x="314" y="648" width="1" height="4"/><rect x="330" y="648" width="1" height="4"/><rect x="346" y="648" width="1" height="8"/><rect x="361" y="648" width="1" height="4"/><rect x="377" y="648" width="1" height="4"/><rect x="392" y="648" width="1" height="4"/><rect x="408" y="648" width="1" height="4"/><rect x="424" y="648" width="1" height="8"/><rect x="439" y="648" width="1" height="4"/><rect x="455" y="648" width="1" height="4"/><rect x="470" y="648" width="1" height="4"/><rect x="486" y="648" width="1" height="4"/><rect x="501" y="648" width="1" height="8"/><rect x="517" y="648" width="1" height="4"/><rect x="533" y="648" width="1" height="4"/><rect x="548" y="648" width="1" height="4"/><rect x="564" y="648" width="1" height="4"/><rect x="579" y="648" width="1" height="8"/><rect x="595" y="648" width="1" height="4"/><rect x="610" y="648" width="1" height="4"/><rect x="626" y="648" width="1" height="4"/><rect x="642" y="648" width="1" height="4"/><rect x="657" y="648" width="1" height="8"/><rect x="673" y="648" width="1" height="4"/><rect x="688" y="648" width="1" height="4"/><rect x="704" y="648" width="1" height="4"/><rect x="719" y="648" width="1" height="4"/><rect x="735" y="648" width="1" height="8"/></g><g fill="#fff" font-size="14.4"><text x="91" y="221" text-anchor="end">0</text><text x="91" y="305" text-anchor="end">-20</text><text x="91" y="390" text-anchor="end">-40</text><text x="91" y="475" text-anchor="end">-60</text><text x="91" y="560" text-anchor="end">-80</text><text x="91" y="645" text-anchor="end">-100</text><text x="111.5" y="670.6" text-anchor="middle">-20.00</text><text x="189.4" y="670.6" text-anchor="middle">-15.00</text><text x="267.2" y="670.6" text-anchor="middle">-10.00</text><text x="345.1" y="670.6" text-anchor="middle">-5.00</text><text x="423.0" y="670.6" text-anchor="middle">0.00</text><text x="500.9" y="670.6" text-anchor="middle">5.00</text><text x="578.8" y="670.6" text-anchor="middle">10.00</text><text x="656.6" y="670.6" text-anchor="middle">15.00</text><text x="734.5" y="670.6" text-anchor="middle">20.00</text></g><text x="325" y="697.5" fill="#fff" font-size="24" font-weight="bold"><tspan letter-spacing="-0.1">Frequency </tspan><tspan x="455" letter-spacing="2.3">(kHz)</tspan></text><text transform="translate(55.3 535.6) rotate(-90)" fill="#fff" font-size="24" font-weight="bold" ><tspan x="0" letter-spacing="0.6">Relative </tspan><tspan x="101" letter-spacing="0.15">Gain </tspan><tspan x="162.5" letter-spacing="2.9">(dB)</tspan></text><text x="338" y="314.6" fill="#1e801e" font-size="11" letter-spacing="-0.08">-5.81 kHz, -25.24 dB</text></svg>
</body></html>
